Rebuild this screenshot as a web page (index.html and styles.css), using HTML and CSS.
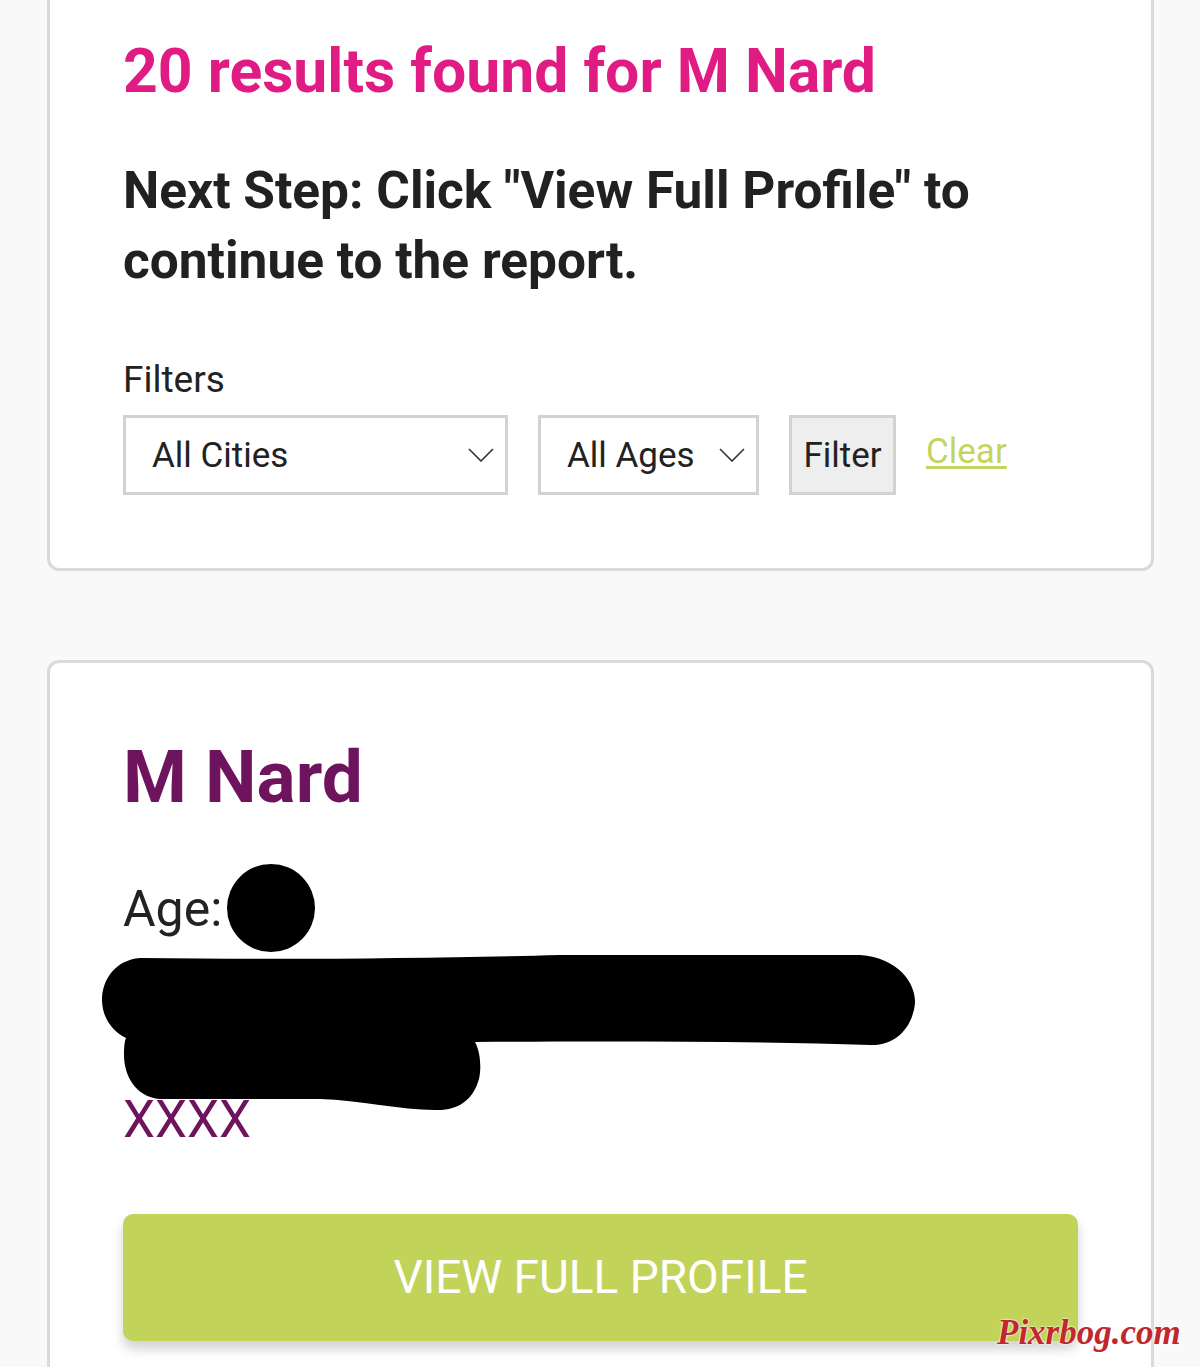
FILE: index.html
```html
<!DOCTYPE html>
<html lang="en">
<head>
<meta charset="utf-8">
<title>Search results</title>
<link rel="stylesheet" href="styles.css">
</head>
<body>
<main class="page">
  <section class="card card-search">
    <h1 class="results-title">20 results found for M Nard</h1>
    <p class="next-step">Next Step: Click "View Full Profile" to<br>continue to the report.</p>
    <div class="filters-label">Filters</div>
    <div class="filters-row">
      <div class="select select-city">
        <span>All Cities</span>
        <svg class="chevron" viewBox="0 0 26 14" width="26" height="14"><polyline points="1,1 13,13 25,1" /></svg>
      </div>
      <div class="select select-age">
        <span>All Ages</span>
        <svg class="chevron" viewBox="0 0 26 14" width="26" height="14"><polyline points="1,1 13,13 25,1" /></svg>
      </div>
      <button class="filter-btn" type="button">Filter</button>
      <a class="clear-link" href="#">Clear</a>
    </div>
  </section>

  <section class="card card-person">
    <h2 class="person-name">M Nard</h2>
    <div class="person-age">Age:<span class="age-value"><span class="redact-dot"></span></span></div>
    <svg class="redaction" viewBox="123 939 955 151" width="955" height="151">
      <path d="M 140 958 C 300 960, 450 958, 560 955 L 860 955 C 900 958, 916 985, 915 1003 C 913 1025, 898 1046, 870 1045 C 750 1041, 600 1041, 475 1042 C 482 1055, 481 1075, 478 1082 C 472 1100, 458 1111, 435 1110 C 400 1110, 360 1100, 320 1099 L 160 1099 C 135 1097, 124 1075, 124 1055 C 124 1045, 125 1040, 126 1038 C 110 1030, 102 1015, 102 1000 C 102 980, 115 960, 140 958 Z" />
    </svg>
    <div class="person-extra">XXXX</div>
    <a class="view-btn" href="#">VIEW FULL PROFILE</a>
  </section>

  <div class="watermark">Pixrbog.com</div>
</main>
</body>
</html>
```

FILE: styles.css
```css
* { box-sizing: border-box; }

html, body {
  margin: 0;
  padding: 0;
}

body {
  background: #f9f9f9;
  font-family: Roboto, "Liberation Sans", sans-serif;
  color: #222222;
  overflow: hidden;
}

.page {
  position: relative;
  height: 1367px;
  overflow: hidden;
}

.card {
  margin-left: 47px;
  width: 1107px;
  background: #ffffff;
  border: 3px solid #dadada;
  border-radius: 12px;
  padding-left: 73px;
  padding-right: 73px;
}

.card-search {
  margin-top: -20px;
  padding-top: 53px;
  padding-bottom: 73px;
}

.results-title {
  margin: 0;
  font-size: 60.7px;
  line-height: 72px;
  font-weight: 700;
  color: #e01b84;
}

.next-step {
  margin: 48px 0 0;
  font-size: 51.4px;
  line-height: 70px;
  font-weight: 700;
  color: #212121;
}

.filters-label {
  margin-top: 62px;
  font-size: 37px;
  line-height: 44px;
  color: #222222;
}

.filters-row {
  margin-top: 13px;
  display: flex;
  align-items: center;
  gap: 30px;
  height: 80px;
}

.select {
  height: 80px;
  border: 3px solid #d2d2d2;
  background: #ffffff;
  display: flex;
  align-items: center;
  justify-content: space-between;
  padding-left: 26px;
  padding-right: 11px;
  font-size: 35px;
  color: #222222;
}

.select-city { width: 385px; }
.select-age { width: 221px; }

.chevron {
  fill: none;
  stroke: #333333;
  stroke-width: 1.6;
}

.filter-btn {
  height: 80px;
  width: 107px;
  border: 3px solid #d2d2d2;
  background: #eeeeee;
  font-family: Roboto, "Liberation Sans", sans-serif;
  font-size: 35px;
  color: #222222;
  padding: 0;
}

.clear-link {
  font-size: 35px;
  color: #c4d55d;
  text-decoration: underline;
  text-decoration-thickness: 3px;
  text-underline-offset: 3px;
  margin-bottom: 8px;
}

.card-search + .card-person {
  margin-top: 89px;
}

.card-person {
  padding-top: 70px;
  padding-bottom: 80px;
  border-bottom-left-radius: 0;
  border-bottom-right-radius: 0;
}

.person-name {
  margin: 0;
  font-size: 73px;
  line-height: 88px;
  font-weight: 700;
  color: #6e135e;
}

.person-age {
  margin-top: 58px;
  font-size: 50px;
  line-height: 60px;
  color: #222222;
}

.age-value {
  position: relative;
  display: inline-block;
  width: 0;
  height: 0;
}

.redact-dot {
  position: absolute;
  left: 5px;
  top: -62px;
  width: 88px;
  height: 88px;
  border-radius: 50%;
  background: #000000;
}

.redaction {
  display: block;
  overflow: visible;
}

.redaction path {
  fill: #000000;
}

.person-extra {
  font-size: 51px;
  line-height: 60px;
  color: #6e135e;
}

.view-btn {
  display: block;
  margin-top: 64px;
  height: 127px;
  line-height: 127px;
  border-radius: 10px;
  background: #c2d359;
  color: #ffffff;
  text-align: center;
  text-decoration: none;
  font-size: 46px;
  font-weight: 400;
  box-shadow: 0 8px 12px rgba(0, 0, 0, 0.18);
}

.watermark {
  position: absolute;
  left: 997px;
  top: 1313px;
  font-family: "Liberation Serif", serif;
  font-style: italic;
  font-weight: 700;
  font-size: 35px;
  line-height: 40px;
  color: #c1272d;
  text-shadow: 0 0 2px #ffffff, 0 0 2px #ffffff;
}
```
